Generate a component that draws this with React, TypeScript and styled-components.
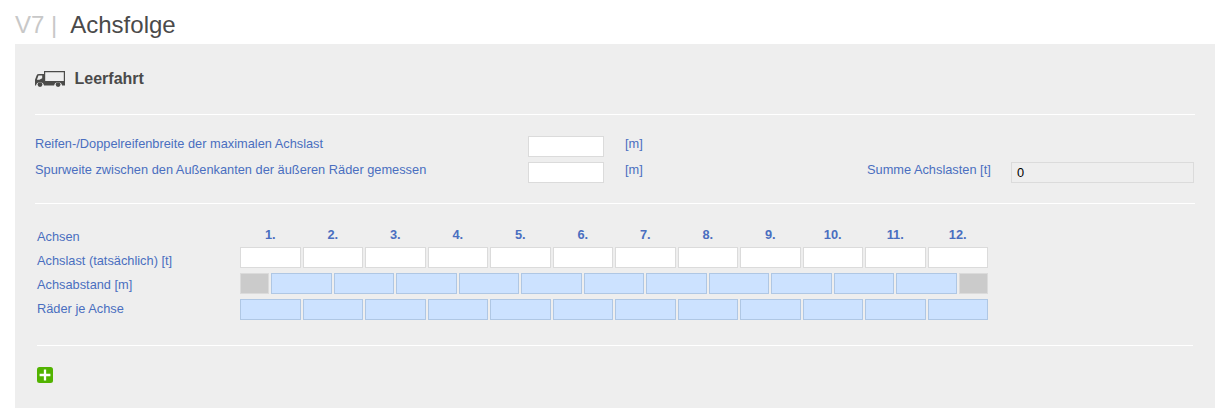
import React from "react";
import styled, { createGlobalStyle } from "styled-components";

const GlobalStyle = createGlobalStyle`
  *, *::before, *::after { box-sizing: border-box; }
  body {
    margin: 0;
    background: #fff;
    color: #4a6ec0;
    font: 12.8px/18px "Liberation Sans", Arial, sans-serif;
  }
`;

const Page = styled.main`
  width: 1215px;
  padding-left: 15px;
`;

const Title = styled.h1`
  height: 44px;
  margin: 0;
  padding-top: 10px;
  display: flex;
  gap: 13px;
  font-size: 24px;
  line-height: 30px;
  font-weight: 400;
  color: #4a4a4a;
  white-space: nowrap;
`;

const Version = styled.span`
  color: #c8c8c8;
`;

const Panel = styled.section`
  height: 364px;
  padding: 0 20px;
  background: #eee;
`;

const PanelHeader = styled.header`
  height: 70px;
  display: flex;
  gap: 9.5px;
  padding-top: 25px;
`;

const TruckSvg = styled.svg`
  display: block;
  margin-top: 1px;
`;

const PanelTitle = styled.h2`
  margin: 0;
  font-size: 16px;
  line-height: 20px;
  color: #4a4a4a;
`;

const Rule = styled.hr<{ $left?: number; $right?: number }>`
  height: 1px;
  border: 0;
  margin: 0 ${(p) => p.$right ?? 0}px 0 ${(p) => p.$left ?? 0}px;
  background: #fff;
`;

const Dimensions = styled.div`
  height: 88px;
  padding-top: 21px;
  display: flex;
  flex-direction: column;
  gap: 5px;
`;

const FormRow = styled.div`
  display: grid;
  grid-template-columns: 493px 97px 242px 144px 183px;
  height: 21px;
`;

const Label = styled.label`
  line-height: 15px;
  white-space: nowrap;
`;

const Field = styled.input<{ $width: number }>`
  width: ${(p) => p.$width}px;
  height: 21px;
  margin: 0;
  padding: 0 5px;
  border: 1px solid #dbdbdb;
  border-radius: 0;
  outline: 0;
  background: ${(p) => (p.readOnly ? "#eee" : "#fff")};
  color: #000;
  font: 12.8px "Liberation Sans", Arial, sans-serif;
`;

const AxleSection = styled.div`
  height: 141px;
  display: flex;
  padding: 21px 0 0 2px;
`;

const AxleLabels = styled.div`
  width: 203px;
  display: grid;
  grid-auto-rows: 24px;
  align-content: start;
  line-height: 24px;
`;

const AxleTable = styled.div`
  width: 748px;
  display: flex;
  flex-direction: column;
  gap: 5px;
`;

const AxleRow = styled.div`
  display: flex;
  gap: 2px;
  height: 21px;
`;

const AxleHeader = styled(AxleRow)`
  height: 17px;
`;

const AxleNumber = styled.div`
  width: 60.5px;
  line-height: 19px;
  font-weight: 700;
  text-align: center;
`;

const tones = {
  plain: ["#fff", "#dbdbdb"],
  blue: ["#cce2ff", "#afc7e4"],
  blocked: ["#cbcbcb", "#dbdbdb"],
};

const Cell = styled.input<{ $tone: keyof typeof tones }>`
  width: ${(p) => (p.$tone === "blocked" ? 29.25 : 60.5)}px;
  height: 21px;
  min-width: 0;
  margin: 0;
  padding: 0 5px;
  border: 1px solid ${(p) => tones[p.$tone][1]};
  border-radius: 0;
  outline: 0;
  background: ${(p) => tones[p.$tone][0]};
  font: 12.8px "Liberation Sans", Arial, sans-serif;
`;

const AddButton = styled.button`
  display: block;
  width: 16px;
  height: 16px;
  margin: 21px 0 0 2px;
  padding: 0;
  border: 0;
  background: none;
`;

const Truck = () => (
  <TruckSvg width="30" height="18" viewBox="0 0 30 18" aria-hidden="true">
    <path
      fillRule="evenodd"
      fill="#4b4b49"
      d="M9 1H30V15.5H27.1a4.1 4.1 0 0 0-8 0H9a4.1 4.1 0 0 0-8 0H0V9.8L1.6 5.4Q2.1 4 4 4H9ZM10.2 2.3V11H28.8V2.3ZM3.5 5.6 1.9 9.8H4.4L7.2 8.3V5.6Z"
    />
    <circle cx="5" cy="14.6" r="2.4" fill="#4b4b49" />
    <circle cx="23.1" cy="14.6" r="2.4" fill="#4b4b49" />
  </TruckSvg>
);

const axles = Array.from({ length: 12 }, (_, i) => i + 1);

export default function App() {
  return (
    <>
      <GlobalStyle />
      <Page>
        <Title>
          <Version>V7 |</Version>
          <span>Achsfolge</span>
        </Title>
        <Panel>
          <PanelHeader>
            <Truck />
            <PanelTitle>Leerfahrt</PanelTitle>
          </PanelHeader>
          <Rule />
          <Dimensions>
            <FormRow>
              <Label htmlFor="tyre">Reifen-/Doppelreifenbreite der maximalen Achslast</Label>
              <Field id="tyre" $width={76} />
              <Label as="span">[m]</Label>
            </FormRow>
            <FormRow>
              <Label htmlFor="track">Spurweite zwischen den Außenkanten der äußeren Räder gemessen</Label>
              <Field id="track" $width={76} />
              <Label as="span">[m]</Label>
              <Label htmlFor="sum">Summe Achslasten [t]</Label>
              <Field id="sum" $width={183} readOnly value="0" />
            </FormRow>
          </Dimensions>
          <Rule />
          <AxleSection>
            <AxleLabels>
              <span>Achsen</span>
              <span>Achslast (tatsächlich) [t]</span>
              <span>Achsabstand [m]</span>
              <span>Räder je Achse</span>
            </AxleLabels>
            <AxleTable>
              <AxleHeader>
                {axles.map((n) => (
                  <AxleNumber key={n}>{n}.</AxleNumber>
                ))}
              </AxleHeader>
              <AxleRow>
                {axles.map((n) => (
                  <Cell key={n} $tone="plain" />
                ))}
              </AxleRow>
              <AxleRow>
                <Cell $tone="blocked" disabled />
                {axles.slice(1).map((n) => (
                  <Cell key={n} $tone="blue" />
                ))}
                <Cell $tone="blocked" disabled />
              </AxleRow>
              <AxleRow>
                {axles.map((n) => (
                  <Cell key={n} $tone="blue" />
                ))}
              </AxleRow>
            </AxleTable>
          </AxleSection>
          <Rule $left={2} $right={2} />
          <AddButton aria-label="Hinzufügen">
            <svg width="16" height="16" viewBox="0 0 16 16" display="block">
              <rect width="16" height="16" rx="2.5" fill="#52b300" />
              <path d="M8 2.6v10.8M2.6 8h10.8" stroke="#fff" strokeWidth="2.3" />
            </svg>
          </AddButton>
        </Panel>
      </Page>
    </>
  );
}
